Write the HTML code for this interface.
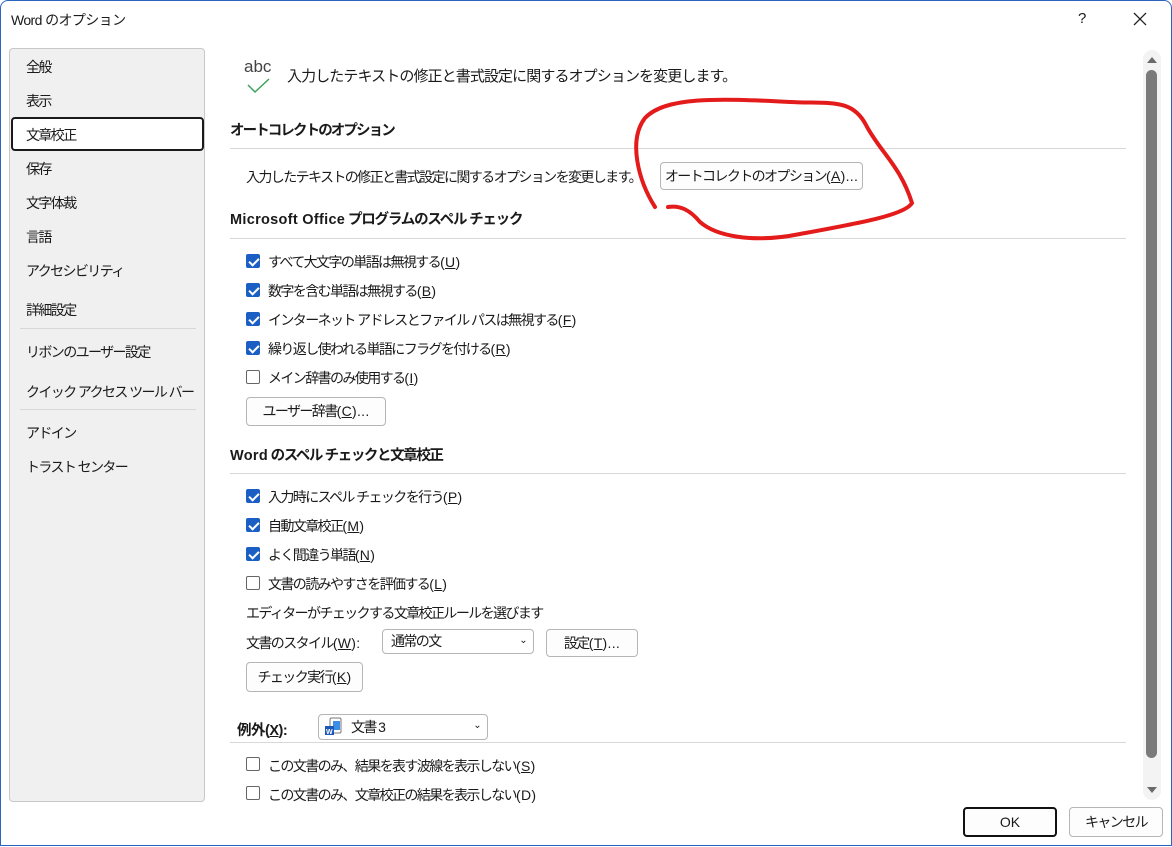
<!DOCTYPE html><html><head><meta charset="utf-8"><style>
*{margin:0;padding:0;box-sizing:border-box}
body{width:1172px;height:847px;background:#fff;font-family:"Liberation Sans","Noto Sans CJK JP",sans-serif;font-size:14px;letter-spacing:-1.6px;color:#1a1a1a;position:relative;overflow:hidden}
.a{position:absolute;white-space:nowrap}
.win{position:absolute;left:0;top:0;width:1172px;height:846px;border:1px solid #2a63c0;border-radius:8px 8px 0 0}
.nav{position:absolute;left:9px;top:48px;width:196px;height:754px;background:#f0f0f0;border:1px solid #c8c8c8;border-radius:4px}
.sep{position:absolute;height:1px;background:#d8d8d8}
.btn{position:absolute;border:1px solid #b5b5b5;border-radius:4px;background:#fdfdfd;text-align:center;font-size:14px;white-space:nowrap}
.cb{position:absolute;width:14px;height:14px;border:1px solid #666;border-radius:2px;background:#fff}
.cb.on{background:#1b5fc4;border-color:#1b5fc4}
.cb.on::after{content:"";position:absolute;left:4px;top:1px;width:4px;height:8px;border:solid #fff;border-width:0 2px 2px 0;transform:rotate(45deg)}
.h{font-weight:bold;font-size:14.5px;letter-spacing:-1.9px}
i{font-style:normal;letter-spacing:0.3px}
u{text-decoration:underline}
</style></head><body>
<div class="win"></div>
<div class="a" style="left:11px;top:10px;font-size:14px;letter-spacing:-0.6px">Word のオプション</div>
<div class="a" style="left:1078px;top:10px;font-size:15px">?</div>
<svg class="a" style="left:1133px;top:12px" width="14" height="14"><path d="M1 1L13 13M13 1L1 13" stroke="#222" stroke-width="1.3"/></svg>
<div class="nav"></div>
<div class="a" style="left:11px;top:117px;width:193px;height:34px;border:2px solid #1a1a1a;border-radius:4px;background:#fff"></div>
<div class="a" style="left:26px;top:57px">全般</div>
<div class="a" style="left:26px;top:91px">表示</div>
<div class="a" style="left:26px;top:125px">文章校正</div>
<div class="a" style="left:26px;top:159px">保存</div>
<div class="a" style="left:26px;top:193px">文字体裁</div>
<div class="a" style="left:26px;top:227px">言語</div>
<div class="a" style="left:26px;top:261px">アクセシビリティ</div>
<div class="a" style="left:26px;top:300px">詳細設定</div>
<div class="sep" style="left:20px;top:328px;width:176px"></div>
<div class="a" style="left:26px;top:342px">リボンのユーザー設定</div>
<div class="a" style="left:26px;top:382px">クイック アクセス ツール バー</div>
<div class="sep" style="left:20px;top:409px;width:176px"></div>
<div class="a" style="left:26px;top:423px">アドイン</div>
<div class="a" style="left:26px;top:457px">トラスト センター</div>

<div class="a" style="left:244px;top:57px;font-size:17px;color:#444;letter-spacing:0">abc</div>
<svg class="a" style="left:247px;top:78px" width="24" height="16"><path d="M1 7L8 14L22 1" stroke="#3aa35a" stroke-width="1.5" fill="none"/></svg>
<div class="a" style="left:287px;top:65px;font-size:15px;letter-spacing:-0.9px">入力したテキストの修正と書式設定に関するオプションを変更します。</div>
<div class="a h" style="left:230px;top:119px">オートコレクトのオプション</div>
<div class="sep" style="left:230px;top:148px;width:896px"></div>
<div class="a" style="left:246px;top:167px">入力したテキストの修正と書式設定に関するオプションを変更します。</div>
<div class="btn" style="left:660px;top:162px;width:203px;height:28px;line-height:26px">オートコレクトのオプション<i>(<u>A</u>)...</i></div>
<div class="a h" style="left:230px;top:208px;letter-spacing:-1.2px"><i>Microsoft Office</i> プログラムのスペル チェック</div>
<div class="sep" style="left:230px;top:238px;width:896px"></div>
<div class="cb on" style="left:246px;top:254px"></div><div class="a" style="left:268px;top:252px">すべて大文字の単語は無視する<i>(<u>U</u>)</i></div>
<div class="cb on" style="left:246px;top:283px"></div><div class="a" style="left:268px;top:281px">数字を含む単語は無視する<i>(<u>B</u>)</i></div>
<div class="cb on" style="left:246px;top:312px"></div><div class="a" style="left:268px;top:310px">インターネット アドレスとファイル パスは無視する<i>(<u>F</u>)</i></div>
<div class="cb on" style="left:246px;top:341px"></div><div class="a" style="left:268px;top:339px">繰り返し使われる単語にフラグを付ける<i>(<u>R</u>)</i></div>
<div class="cb" style="left:246px;top:370px"></div><div class="a" style="left:268px;top:368px">メイン辞書のみ使用する<i>(<u>I</u>)</i></div>
<div class="btn" style="left:246px;top:397px;width:140px;height:29px;line-height:27px">ユーザー辞書<i>(<u>C</u>)...</i></div>
<div class="a h" style="left:230px;top:444px;letter-spacing:-1.4px"><i>Word</i> のスペル チェックと文章校正</div>
<div class="sep" style="left:230px;top:473px;width:896px"></div>
<div class="cb on" style="left:246px;top:489px"></div><div class="a" style="left:268px;top:487px">入力時にスペル チェックを行う<i>(<u>P</u>)</i></div>
<div class="cb on" style="left:246px;top:518px"></div><div class="a" style="left:268px;top:516px">自動文章校正<i>(<u>M</u>)</i></div>
<div class="cb on" style="left:246px;top:547px"></div><div class="a" style="left:268px;top:545px">よく間違う単語<i>(<u>N</u>)</i></div>
<div class="cb" style="left:246px;top:576px"></div><div class="a" style="left:268px;top:574px">文書の読みやすさを評価する<i>(<u>L</u>)</i></div>
<div class="a" style="left:246px;top:603px">エディターがチェックする文章校正ルールを選びます</div>
<div class="a" style="left:246px;top:633px">文書のスタイル<i>(<u>W</u>):</i></div>
<div class="btn" style="left:382px;top:629px;width:152px;height:25px;text-align:left;padding-left:8px;line-height:23px;background:#fff">通常の文<span style="position:absolute;right:7px;top:-1px;font-size:10px">⌄</span></div>
<div class="btn" style="left:546px;top:629px;width:92px;height:28px;line-height:26px">設定<i>(<u>T</u>)...</i></div>
<div class="btn" style="left:246px;top:662px;width:117px;height:30px;line-height:28px">チェック実行<i>(<u>K</u>)</i></div>
<div class="a h" style="left:237px;top:719px;letter-spacing:-0.5px">例外(<u>X</u>):</div>
<div class="btn" style="left:318px;top:714px;width:170px;height:26px;text-align:left;padding-left:32px;line-height:24px;background:#fff">文書 <i>3</i><span style="position:absolute;right:7px;top:-1px;font-size:10px">⌄</span></div>
<svg class="a" style="left:324px;top:717px" width="20" height="20"><rect x="6" y="1" width="11" height="15" rx="1.5" fill="#fff" stroke="#777"/><rect x="9" y="4" width="7" height="9" fill="#3b8ee8"/><rect x="1" y="9" width="9" height="9" fill="#1d57b8"/><text x="2" y="17" font-size="7" fill="#fff" font-weight="bold" font-family="Liberation Sans" letter-spacing="0">W</text></svg>
<div class="sep" style="left:230px;top:742px;width:896px"></div>
<div class="cb" style="left:246px;top:757px"></div><div class="a" style="left:268px;top:756px">この文書のみ、結果を表す波線を表示しない<i>(<u>S</u>)</i></div>
<div class="cb" style="left:246px;top:786px"></div><div class="a" style="left:268px;top:785px">この文書のみ、文章校正の結果を表示しない<i>(D)</i></div>

<div class="a" style="left:1143px;top:50px;width:18px;height:750px;background:#f3f3f3;border-radius:9px"></div>
<div class="a" style="left:1146px;top:70px;width:11px;height:688px;background:#7a7a7a;border-radius:6px"></div>
<svg class="a" style="left:1146px;top:55px" width="12" height="10"><path d="M1 8L6 2L11 8Z" fill="#6a6a6a"/></svg>
<svg class="a" style="left:1146px;top:785px" width="12" height="10"><path d="M1 2L6 8L11 2Z" fill="#6a6a6a"/></svg>
<div class="btn" style="left:963px;top:807px;width:94px;height:30px;line-height:26px;border:2px solid #111;letter-spacing:0">OK</div>
<div class="btn" style="left:1069px;top:807px;width:94px;height:30px;line-height:28px">キャンセル</div>

<svg class="a" style="left:0;top:0" width="1172" height="847"><path d="M655 207C638 180 628 140 645 118C665 97 715 98 790 102C830 104 852 98 866 125C880 152 900 165 912 203C905 215 860 223 800 234C750 244 715 235 700 222C690 210 680 205 668 207" stroke="#e31b1b" stroke-width="4" fill="none" stroke-linecap="round"/></svg>
</body></html>
